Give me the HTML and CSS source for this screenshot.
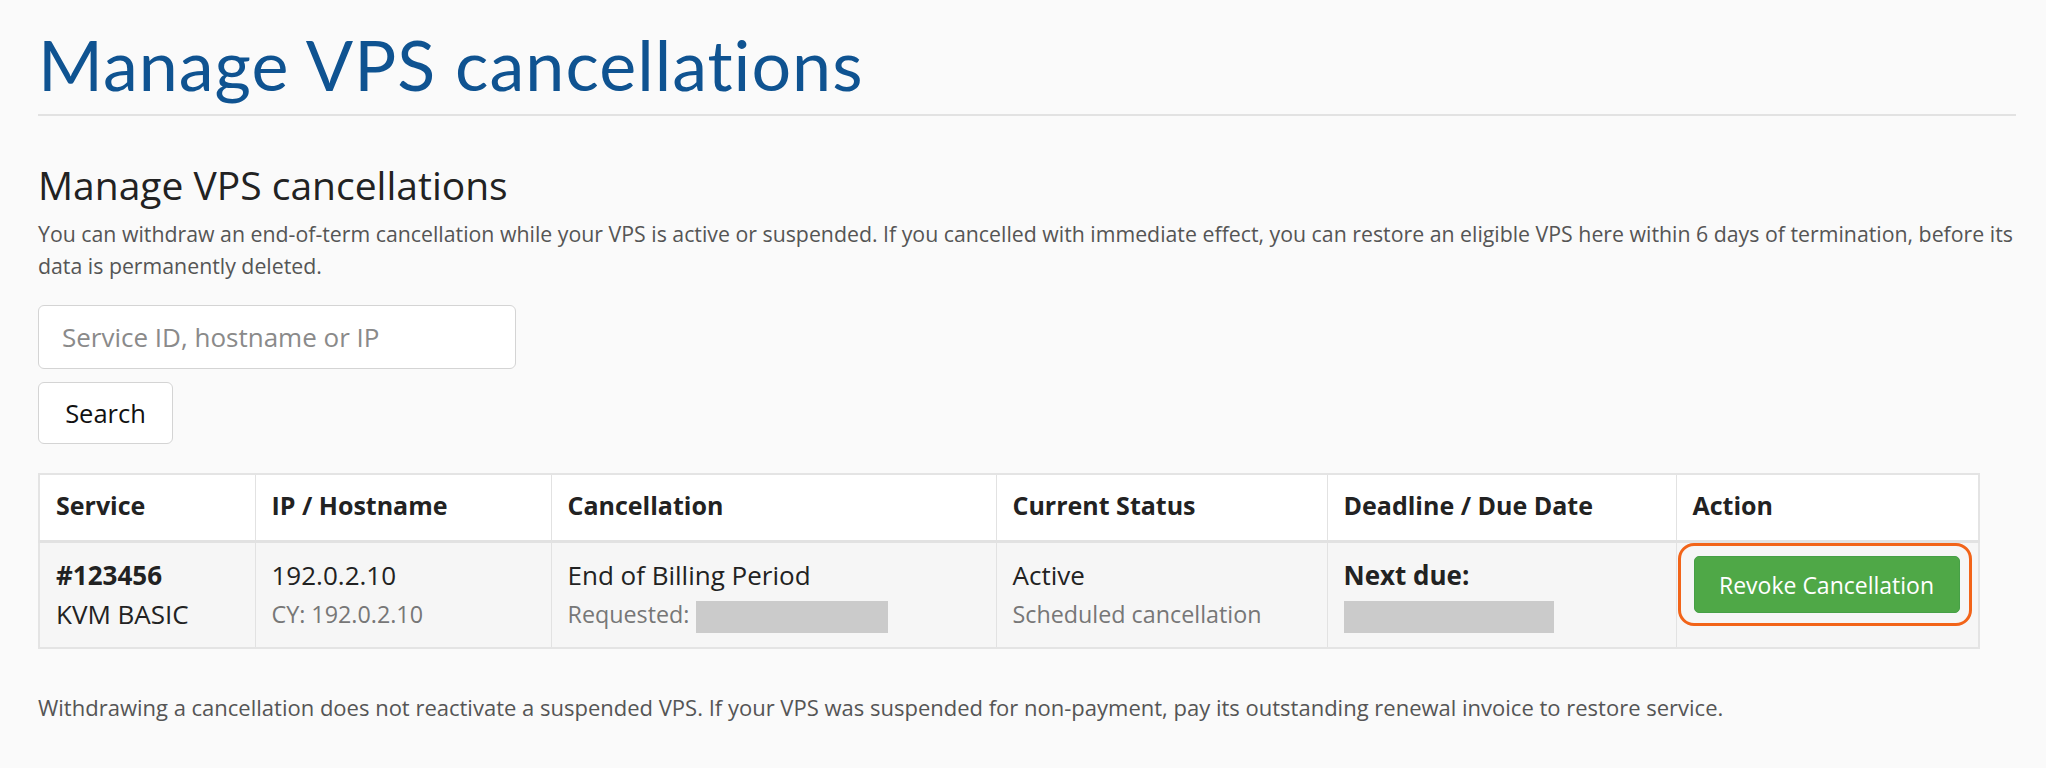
FILE: index.html
```html
<!DOCTYPE html>
<html lang="en">
<head>
<meta charset="utf-8">
<title>Manage VPS cancellations</title>
<link rel="stylesheet" href="styles.css">
</head>
<body>
<div class="page">
  <h1 class="title">Manage VPS cancellations</h1>
  <div class="section">
    <h2 class="subtitle">Manage VPS cancellations</h2>
    <p class="intro">You can withdraw an end-of-term cancellation while your VPS is active or suspended. If you cancelled with immediate effect, you can restore an eligible VPS here within 6 days of termination, before its data is permanently deleted.</p>
    <form class="search">
      <input class="search-input" type="text" placeholder="Service ID, hostname or IP">
      <div><button class="search-btn" type="button">Search</button></div>
    </form>
    <table class="grid">
      <colgroup>
        <col class="c1"><col class="c2"><col class="c3"><col class="c4"><col class="c5"><col class="c6">
      </colgroup>
      <thead>
        <tr>
          <th>Service</th>
          <th>IP / Hostname</th>
          <th>Cancellation</th>
          <th>Current Status</th>
          <th>Deadline / Due Date</th>
          <th>Action</th>
        </tr>
      </thead>
      <tbody>
        <tr>
          <td><div class="main strong">#123456</div><div class="main">KVM BASIC</div></td>
          <td><div class="main">192.0.2.10</div><div class="sub">CY: 192.0.2.10</div></td>
          <td><div class="main">End of Billing Period</div><div class="sub">Requested: <span class="redact r1"></span></div></td>
          <td><div class="main">Active</div><div class="sub">Scheduled cancellation</div></td>
          <td><div class="main strong">Next due:</div><div class="sub"><span class="redact r2"></span></div></td>
          <td><span class="highlight"><button class="revoke" type="button">Revoke Cancellation</button></span></td>
        </tr>
      </tbody>
    </table>
    <p class="note">Withdrawing a cancellation does not reactivate a suspended VPS. If your VPS was suspended for non-payment, pay its outstanding renewal invoice to restore service.</p>
  </div>
</div>
</body>
</html>
```
FILE: styles.css
```css
html, body {
  margin: 0;
  padding: 0;
  background: #fafafa;
}
body {
  font-family: "Open Sans", "Noto Sans", sans-serif;
  color: #222;
}
.page {
  padding: 24px 30px 0 38px;
}
.title {
  margin: 0;
  font-family: Lato, "Open Sans", sans-serif;
  font-weight: 400;
  font-size: 70px;
  letter-spacing: 1px;
  line-height: 80px;
  color: #0f5391;
  padding-bottom: 10px;
  border-bottom: 2px solid #e2e2e2;
}
.section {
  padding-top: 43px;
}
.subtitle {
  margin: 0;
  font-weight: 400;
  font-size: 39px;
  line-height: 52px;
  color: #222;
}
.intro {
  margin: 7px 0 0;
  font-size: 21.3px;
  line-height: 32px;
  color: #555;
}
.search {
  margin: 23px 0 0;
}
.search-input {
  display: block;
  box-sizing: border-box;
  width: 478px;
  height: 64px;
  padding: 0 23px;
  border: 1px solid #d4d4d4;
  border-radius: 6px;
  background: #fff;
  font-family: "Open Sans", sans-serif;
  font-size: 26px;
  color: #333;
}
.search-input::placeholder {
  color: #8a8a8a;
}
.search-btn {
  margin-top: 13px;
  box-sizing: border-box;
  width: 135px;
  height: 62px;
  border: 1px solid #d4d4d4;
  border-radius: 6px;
  background: #fff;
  font-family: "Open Sans", sans-serif;
  font-size: 25.5px;
  color: #111;
  padding: 0;
}
.grid {
  margin-top: 29px;
  width: 1940px;
  table-layout: fixed;
  border-collapse: collapse;
  border: 2px solid #e4e4e4;
}
.c1 { width: 216px; }
.c2 { width: 296px; }
.c3 { width: 445px; }
.c4 { width: 331px; }
.c5 { width: 349px; }
.c6 { width: 303px; }
.grid th, .grid td {
  border: 1px solid #e2e2e2;
  text-align: left;
  vertical-align: top;
}
.grid th {
  padding: 13px 16px 18px;
  background: #fff;
  font-weight: 700;
  font-size: 25px;
  line-height: 34px;
  color: #222;
  border-bottom: 3px solid #e2e2e2;
}
.grid td {
  padding: 13px 16px;
  background: #f6f6f6;
  font-size: 26px;
}
.main {
  line-height: 39px;
  color: #222;
}
.strong {
  font-weight: 700;
}
.sub {
  margin-top: 1px;
  font-size: 23.3px;
  line-height: 37px;
  color: #777;
}
.redact {
  display: inline-block;
  vertical-align: middle;
  height: 32px;
  background: #cbcbcb;
}
.r1 { width: 192px; }
.r2 { width: 210px; }
.highlight {
  position: relative;
  display: inline-block;
  margin-top: 0;
  margin-left: 1px;
}
.highlight::after {
  content: "";
  position: absolute;
  top: -13px;
  bottom: -13px;
  left: -16px;
  right: -12px;
  border: 3px solid #f26419;
  border-radius: 16px;
  pointer-events: none;
}
.revoke {
  display: block;
  box-sizing: border-box;
  width: 266px;
  height: 57px;
  border: 1px solid #46a046;
  border-radius: 5px;
  background: #4fa847;
  color: #fff;
  font-family: "Open Sans", sans-serif;
  font-size: 23px;
  padding: 0;
}
.note {
  margin: 42px 0 0;
  font-size: 22px;
  line-height: 33px;
  color: #555;
}
```
